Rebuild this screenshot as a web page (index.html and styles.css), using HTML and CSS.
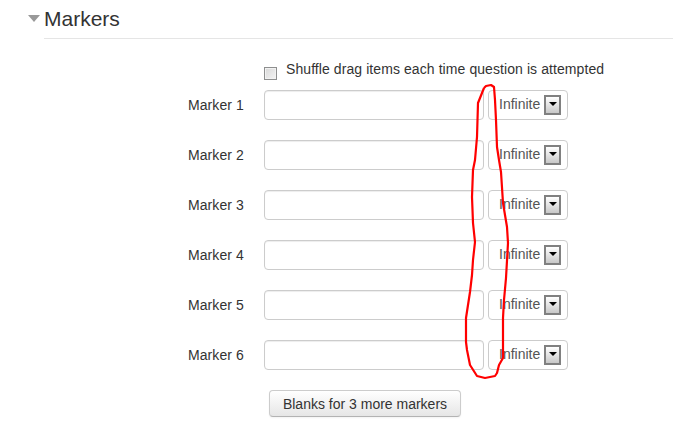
FILE: index.html
```html
<!DOCTYPE html>
<html lang="en">
<head>
    <meta charset="UTF-8">
    <title>Markers</title>
    <link rel="stylesheet" href="styles.css">
</head>
<body>
    <div class="page">
        <div class="legend">
            <span class="collapse-arrow"></span>
            <h2 class="section-title">Markers</h2>
        </div>

        <div class="form-row shuffle-row">
            <div class="form-label"></div>
            <label class="shuffle"><input type="checkbox" class="check"> Shuffle drag items each time question is attempted</label>
        </div>

        <div class="form-row marker-row">
            <label class="form-label">Marker 1</label>
            <input type="text" class="form-control">
            <div class="select-box">Infinite<span class="select-btn"></span></div>
        </div>
        <div class="form-row marker-row">
            <label class="form-label">Marker 2</label>
            <input type="text" class="form-control">
            <div class="select-box">Infinite<span class="select-btn"></span></div>
        </div>
        <div class="form-row marker-row">
            <label class="form-label">Marker 3</label>
            <input type="text" class="form-control">
            <div class="select-box">Infinite<span class="select-btn"></span></div>
        </div>
        <div class="form-row marker-row">
            <label class="form-label">Marker 4</label>
            <input type="text" class="form-control">
            <div class="select-box">Infinite<span class="select-btn"></span></div>
        </div>
        <div class="form-row marker-row">
            <label class="form-label">Marker 5</label>
            <input type="text" class="form-control">
            <div class="select-box">Infinite<span class="select-btn"></span></div>
        </div>
        <div class="form-row marker-row">
            <label class="form-label">Marker 6</label>
            <input type="text" class="form-control">
            <div class="select-box">Infinite<span class="select-btn"></span></div>
        </div>

        <div class="form-row button-row">
            <div class="form-label"></div>
            <button type="button" class="btn">Blanks for 3 more markers</button>
        </div>

        <!-- hand drawn annotation on top of the form -->
        <svg class="scribble" width="673" height="434" viewBox="0 0 673 434">
            <path d="M484 88 L486 86 L491 85 L494 87 L495 100 L496 120 L497 147 L499 160 L501 172 L503 203 L507 227 L508 243 L506 278 L504 300 L503 318 L503 358 L499 365 L497 373 L495 376 L485 378 L477 376 L470 365 L467 350 L466 342 L466 318 L470 292 L472 275 L473 260 L475 242 L473 223 L472 197 L473 170 L475 160 L477 137 L478 103 L484 88"/>
        </svg>
    </div>
</body>
</html>
```

FILE: styles.css
```css
html, body {
    margin: 0;
    padding: 0;
    background-color: #fff;
    overflow: hidden;
}
body {
    font-family: "Liberation Sans", Arial, sans-serif;
    font-size: 14px;
    color: #333;
}
.page {
    position: relative;
    width: 673px;
    height: 434px;
}
.legend {
    display: flex;
    align-items: flex-start;
    padding-left: 28px;
    height: 38px;
}
.collapse-arrow {
    width: 0;
    height: 0;
    margin-top: 15px;
    margin-right: 4px;
    border-left: 6px solid transparent;
    border-right: 6px solid transparent;
    border-top: 7px solid #999;
}
.section-title {
    flex: 1;
    margin: 0;
    height: 38px;
    border-bottom: 1px solid #e5e5e5;
    font-size: 21px;
    font-weight: normal;
    line-height: 38px;
}
.form-row {
    display: flex;
    align-items: center;
}
.form-label {
    width: 244px;
    flex-shrink: 0;
    margin-right: 20px;
    text-align: right;
    letter-spacing: 0.1px;
}
.shuffle-row {
    height: 20px;
    margin-top: 21px;
    margin-bottom: 11px;
}
.shuffle {
    display: flex;
    align-items: center;
    line-height: 20px;
    letter-spacing: 0.08px;
}
.check {
    appearance: none;
    width: 13px;
    height: 13px;
    margin: 8px 9px 0 0;
    border: 1px solid #8e8f8f;
    background: linear-gradient(135deg, #d8d8d8, #f4f4f4);
    box-shadow: inset 0 0 0 1px #f2f2f2;
}
.marker-row {
    height: 30px;
    margin-bottom: 20px;
}
.form-control {
    box-sizing: border-box;
    width: 220px;
    height: 30px;
    margin: 0 4px 0 0;
    padding: 4px 6px;
    border: 1px solid #ccc;
    border-radius: 4px;
    box-shadow: inset 0 1px 1px rgba(0, 0, 0, 0.075);
}
.select-box {
    box-sizing: border-box;
    display: flex;
    align-items: center;
    width: 80px;
    height: 30px;
    padding: 0 0 2px 10px;
    border: 1px solid #ccc;
    border-radius: 4px;
    color: #555;
}
.select-btn {
    box-sizing: border-box;
    position: relative;
    width: 17px;
    height: 20px;
    margin: 2px 0 0 4px;
    border: 2px solid #808080;
    background: linear-gradient(#fff, #c8c8c8);
}
.select-btn::after {
    content: "";
    position: absolute;
    left: 3px;
    top: 5px;
    border-left: 4px solid transparent;
    border-right: 4px solid transparent;
    border-top: 4px solid #000;
}
.btn {
    box-sizing: border-box;
    margin-left: 5px;
    width: 192px;
    height: 27px;
    padding: 0;
    border: 1px solid #ccc;
    border-bottom-color: #b3b3b3;
    border-radius: 4px;
    background: linear-gradient(#fff, #e6e6e6);
    box-shadow: 0 1px 2px rgba(0, 0, 0, 0.05);
    font-family: inherit;
    font-size: 14px;
    color: #333;
}
.scribble {
    position: absolute;
    left: 0;
    top: 0;
    pointer-events: none;
}
.scribble path {
    fill: none;
    stroke: #f00;
    stroke-width: 2.2;
    stroke-linejoin: round;
}
```
